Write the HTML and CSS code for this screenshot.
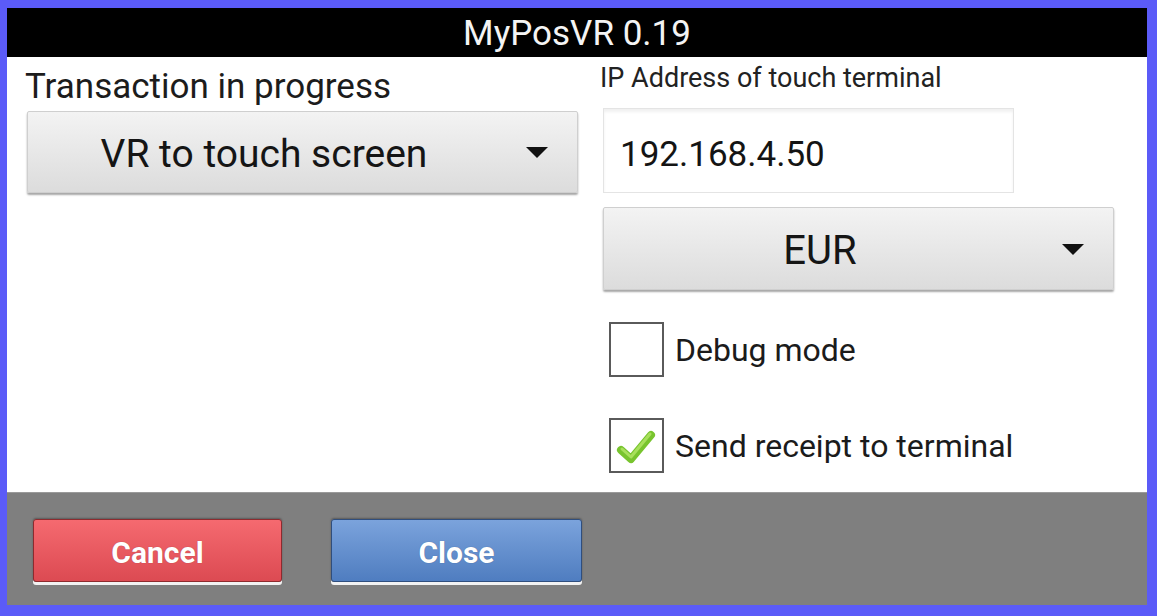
FILE: index.html
```html
<!DOCTYPE html>
<html>
<head>
<meta charset="utf-8">
<link rel="stylesheet" href="styles.css">
</head>
<body>
<div class="frame">
  <div class="titlebar">MyPosVR 0.19</div>
  <div class="content">
    <div class="col left">
      <div class="label-big">Transaction in progress</div>
      <div class="spinner spinner-left">
        <span class="spinner-text">VR to touch screen</span>
        <span class="arrow"></span>
      </div>
    </div>
    <div class="col right">
      <div class="label-small">IP Address of touch terminal</div>
      <div class="input">192.168.4.50</div>
      <div class="spinner spinner-right">
        <span class="spinner-text eur">EUR</span>
        <span class="arrow"></span>
      </div>
      <div class="check-row first">
        <span class="box"></span>
        <span class="check-label">Debug mode</span>
      </div>
      <div class="check-row">
        <span class="box">
          <svg class="tick" width="46" height="40" viewBox="0 0 46 40">
            <path d="M8 24 L18 33 L38 9" fill="none" stroke="#78c42e" stroke-width="8" stroke-linecap="round" stroke-linejoin="round"/>
            <path d="M9 23 L18 31 L37 8" fill="none" stroke="#a8e05c" stroke-width="3" stroke-linecap="round" stroke-linejoin="round"/>
          </svg>
        </span>
        <span class="check-label">Send receipt to terminal</span>
      </div>
    </div>
  </div>
  <div class="footer">
    <div class="btn btn-cancel">Cancel</div>
    <div class="btn btn-close">Close</div>
  </div>
</div>
</body>
</html>
```

FILE: styles.css
```css
html, body {
  margin: 0;
  padding: 0;
  background: #5b5bf8;
}
body {
  font-family: Roboto, "Liberation Sans", sans-serif;
  color: #1a1a1a;
}
.frame {
  width: 1140px;
  height: 597px;
  margin: 8px 0 0 7px;
  display: flex;
  flex-direction: column;
  background: #fff;
}
.titlebar {
  height: 49px;
  box-sizing: border-box;
  padding-top: 3px;
  background: #000;
  color: #f4f4f4;
  font-size: 35px;
  line-height: 46px;
  text-align: center;
}
.content {
  height: 435px;
  display: flex;
  background: #fff;
}
.col {
  display: flex;
  flex-direction: column;
}
.left {
  width: 583px;
}
.right {
  flex: 1;
}
.label-big {
  font-size: 35px;
  margin: 8px 0 0 18px;
  height: 44px;
  line-height: 44px;
  color: #1c1c1c;
}
.label-small {
  font-size: 27px;
  margin: 5px 0 0 10px;
  height: 32px;
  line-height: 32px;
  color: #222;
}
.spinner {
  position: relative;
  display: flex;
  align-items: center;
  justify-content: center;
  padding: 4px 77px 0 0;
  background: linear-gradient(#f3f3f3, #dcdcdc);
  border: 1px solid #cfcfcf;
  border-radius: 2px;
  box-shadow: 0 2px 2px rgba(0,0,0,0.35);
  box-sizing: border-box;
}
.spinner-left {
  margin: 2px 0 0 20px;
  width: 551px;
  height: 82px;
}
.spinner-right {
  margin: 14px 0 0 13px;
  width: 511px;
  height: 83px;
}
.spinner-text {
  font-size: 39px;
  color: #151515;
}
.spinner-text.eur {
  font-size: 40px;
}
.arrow {
  position: absolute;
  right: 29px;
  top: 50%;
  margin-top: -5px;
  width: 0;
  height: 0;
  border-left: 11px solid transparent;
  border-right: 11px solid transparent;
  border-top: 11px solid #111;
}
.input {
  margin: 14px 0 0 13px;
  width: 411px;
  height: 85px;
  box-sizing: border-box;
  border: 1px solid #e4e4e4;
  box-shadow: inset 0 3px 3px rgba(0,0,0,0.06);
  font-size: 35px;
  line-height: 85px;
  padding: 3px 0 0 16px;
  color: #141414;
}
.check-row {
  display: flex;
  align-items: center;
  margin: 32px 0 0 19px;
}
.check-row + .check-row {
  margin-top: 41px;
}
.box {
  width: 55px;
  height: 55px;
  box-sizing: border-box;
  border: 2px solid #5a5a5a;
  display: flex;
  align-items: center;
  justify-content: center;
  background: #fff;
}
.tick {
  display: block;
  margin-left: -2px;
}
.check-label {
  font-size: 32px;
  margin-left: 11px;
  color: #1b1b1b;
}
.footer {
  flex: 1;
  background: #7f7f7f;
  border-top: 1px solid #9a9a9a;
  display: flex;
  align-items: flex-start;
  padding: 26px 0 0 26px;
  gap: 49px;
}
.btn {
  width: 249px;
  height: 63px;
  box-sizing: border-box;
  border-radius: 3px;
  color: #fff;
  font-size: 30px;
  font-weight: 700;
  text-align: center;
  line-height: 65px;
  box-shadow: 0 3px 0 #f2f2f2, 0 -1px 2px rgba(0,0,0,0.3);
  text-shadow: 0 0 1px rgba(0,0,0,0.3);
}
.btn-cancel {
  background: linear-gradient(#f56a70, #dc4a52);
  border: 1px solid #8e2a2e;
}
.btn-close {
  width: 251px;
  background: linear-gradient(#7ba3dc, #4f7dc0);
  border: 1px solid #2f4e7e;
}
```
